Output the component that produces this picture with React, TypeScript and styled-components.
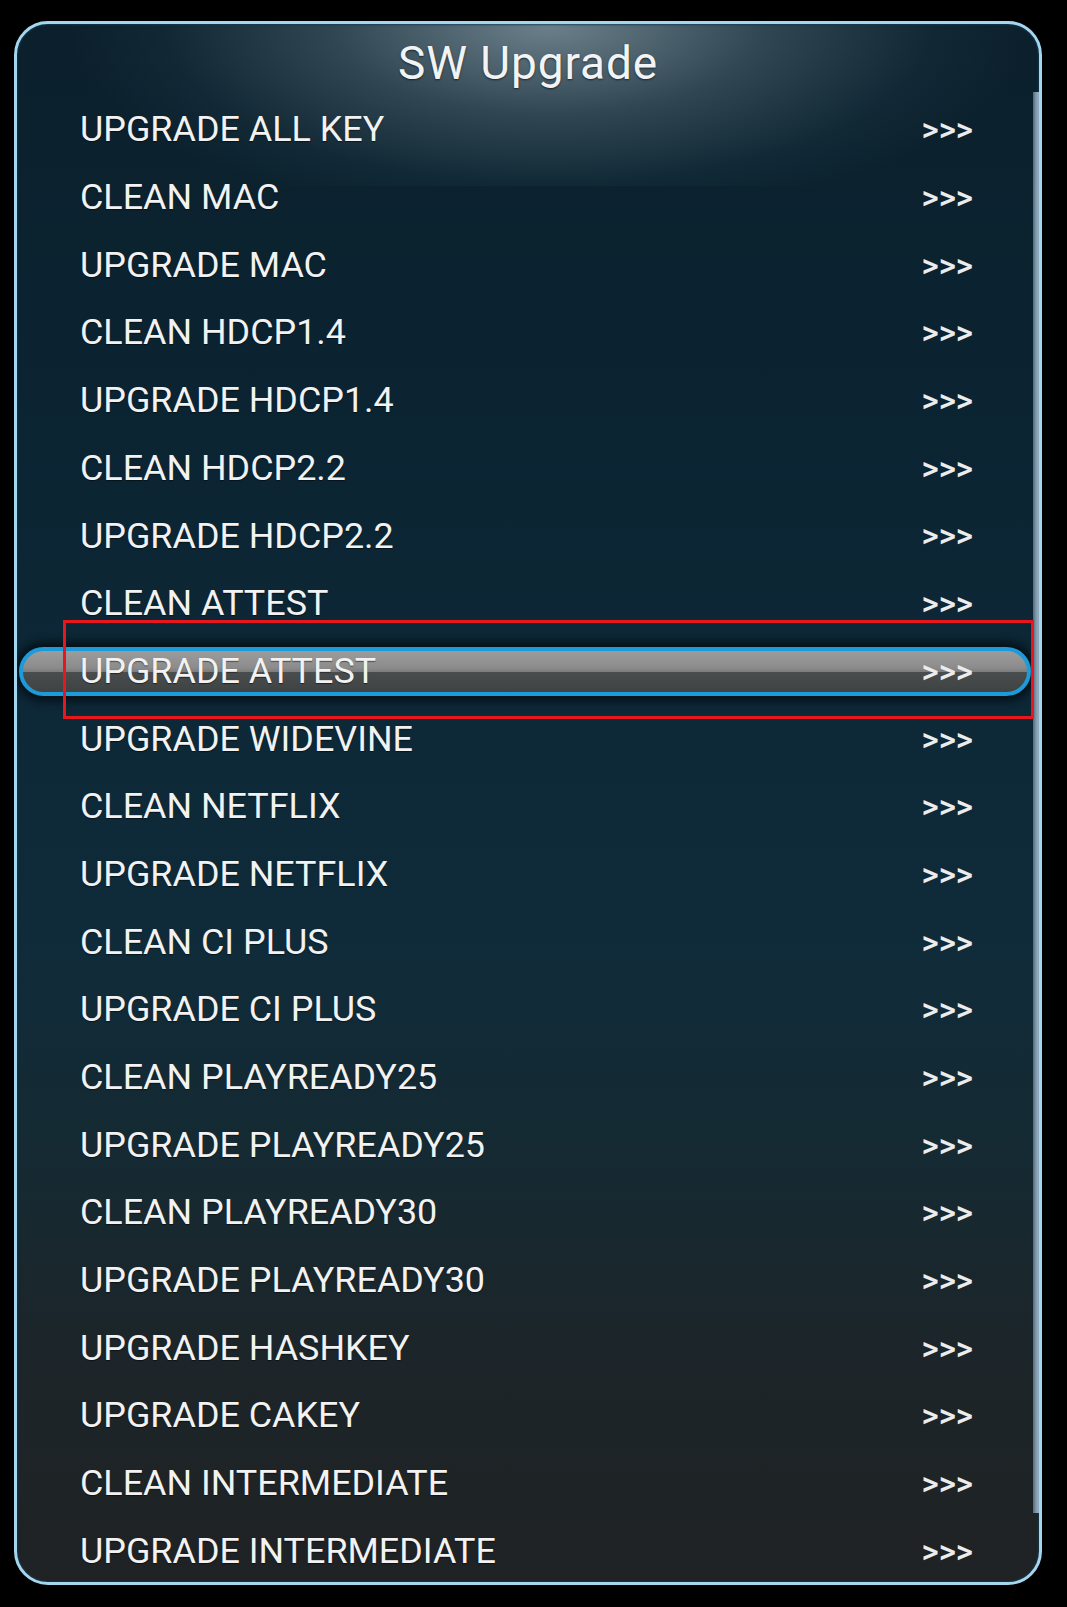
import React from "react";
import styled, { createGlobalStyle } from "styled-components";

const GlobalStyle = createGlobalStyle`
  html, body {
    margin: 0;
    padding: 0;
    background: #000;
  }
  body {
    width: 1067px;
    height: 1607px;
    overflow: hidden;
    font-family: Roboto, "Liberation Sans", sans-serif;
  }
`;

const Screen = styled.div`
  width: 1067px;
  height: 1607px;
  background: #000;
  padding: 21px 0 0 14px;
  box-sizing: border-box;
`;

const Panel = styled.div`
  position: relative;
  width: 1028px;
  height: 1564px;
  box-sizing: border-box;
  border: 3px solid #a4d6ef;
  border-radius: 34px;
  display: flex;
  flex-direction: column;
  overflow: hidden;
  background:
    radial-gradient(
      ellipse 480px 200px at 52% 0px,
      rgba(135, 156, 166, 0.78) 0%,
      rgba(85, 108, 120, 0.5) 45%,
      rgba(34, 60, 74, 0.28) 80%,
      rgba(20, 45, 60, 0) 100%
    ) top / 100% 162px no-repeat,
    linear-gradient(
      180deg,
      #0b202c 0%,
      #0b2331 20%,
      #0d2837 45%,
      #0f2b3a 58%,
      #152a33 72%,
      #1c2529 86%,
      #202224 100%
    );
  box-shadow: inset 0 0 2px 1px rgba(20, 60, 80, 0.8);
`;

const Title = styled.div`
  height: 71px;
  padding-top: 8px;
  box-sizing: border-box;
  line-height: 63px;
  text-align: center;
  font-size: 46px;
  letter-spacing: 0.9px;
  color: #f1f3f4;
  text-shadow: 0 1px 2px rgba(0, 0, 0, 0.6);
`;

const List = styled.div`
  display: flex;
  flex-direction: column;
  padding-top: 1.5px;
`;

const Row = styled.div`
  position: relative;
  height: 67.7px;
  display: flex;
  align-items: center;
  padding: 0 8px 0 2px;
`;

const RowBar = styled.div<{ $selected?: boolean }>`
  flex: 1;
  height: 49px;
  box-sizing: border-box;
  display: flex;
  align-items: center;
  justify-content: space-between;
  padding: 0 54px 0 57px;
  border-radius: 25px;
  border: 4px solid ${(p) => (p.$selected ? "#1d9ad8" : "transparent")};
  background: ${(p) =>
    p.$selected
      ? "linear-gradient(180deg, #9c9c9c 0%, #8c8c8c 40%, #7e7e7e 50%, #4a4d4e 52%, #404344 100%)"
      : "transparent"};
  box-shadow: ${(p) =>
    p.$selected ? "0 0 8px 5px rgba(2, 10, 16, 0.75)" : "none"};
`;

const Label = styled.span`
  font-size: 35.9px;
  line-height: 1;
  color: #f2f2f2;
  white-space: nowrap;
  text-shadow: 0 1px 1px rgba(0, 0, 0, 0.5);
`;

const Arrow = styled.span`
  font-size: 33px;
  font-weight: 500;
  line-height: 1;
  color: #ececec;
  padding-bottom: 1px;
`;

const Annotation = styled.div`
  position: absolute;
  z-index: 2;
  left: 46px;
  right: 5px;
  top: -18px;
  bottom: -13px;
  border: 3px solid #e8161d;
  pointer-events: none;
`;

const Scrollbar = styled.div`
  position: absolute;
  z-index: 1;
  top: 68px;
  bottom: 69px;
  right: -2px;
  width: 8px;
  background: linear-gradient(90deg, #4f6a7b 0%, #7590a3 30%, #8ea8ba 55%, #8ea8ba 100%);
`;

const items = [
  "UPGRADE ALL KEY",
  "CLEAN MAC",
  "UPGRADE MAC",
  "CLEAN HDCP1.4",
  "UPGRADE HDCP1.4",
  "CLEAN HDCP2.2",
  "UPGRADE HDCP2.2",
  "CLEAN ATTEST",
  "UPGRADE ATTEST",
  "UPGRADE WIDEVINE",
  "CLEAN NETFLIX",
  "UPGRADE NETFLIX",
  "CLEAN CI PLUS",
  "UPGRADE CI PLUS",
  "CLEAN PLAYREADY25",
  "UPGRADE PLAYREADY25",
  "CLEAN PLAYREADY30",
  "UPGRADE PLAYREADY30",
  "UPGRADE HASHKEY",
  "UPGRADE CAKEY",
  "CLEAN INTERMEDIATE",
  "UPGRADE INTERMEDIATE",
];

const SELECTED = 8;

export default function App() {
  return (
    <>
      <GlobalStyle />
      <Screen>
        <Panel>
          <Title>SW Upgrade</Title>
          <List>
            {items.map((label, i) => (
              <Row key={label}>
                <RowBar $selected={i === SELECTED}>
                  <Label>{label}</Label>
                  <Arrow>&gt;&gt;&gt;</Arrow>
                </RowBar>
                {i === SELECTED && <Annotation />}
              </Row>
            ))}
          </List>
          <Scrollbar />
        </Panel>
      </Screen>
    </>
  );
}
